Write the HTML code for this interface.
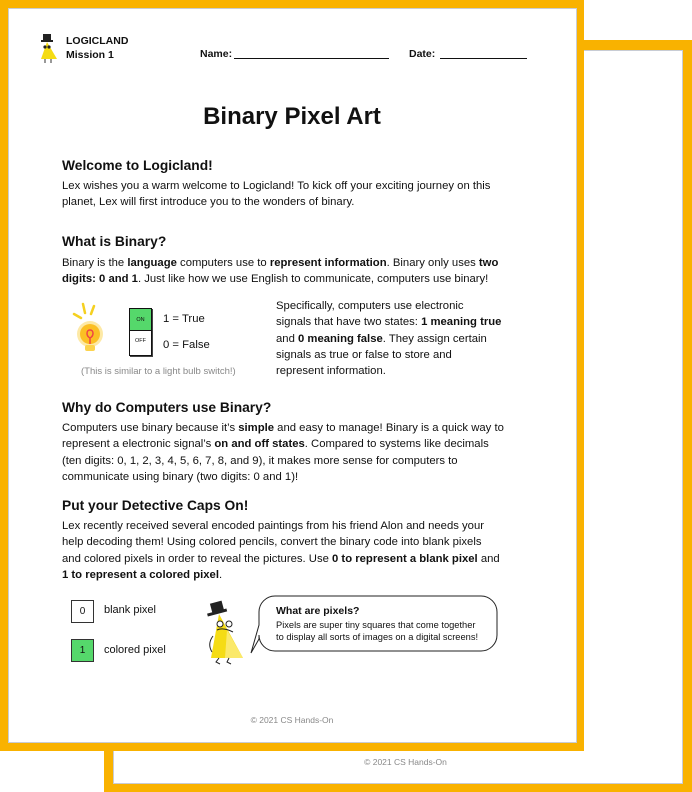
<!DOCTYPE html>
<html><head><meta charset="utf-8"><style>
*{margin:0;padding:0;box-sizing:border-box}
body{width:692px;height:792px;position:relative;background:#fff;font-family:"Liberation Sans",sans-serif;color:#111;overflow:hidden}
.a{position:absolute;white-space:nowrap}
.t{font-size:11.3px;line-height:16.3px}
.h{font-size:13.8px;font-weight:bold}
b{font-weight:bold}
</style></head><body>
<div class="a" style="left:104px;top:40px;width:588px;height:752px;background:#F9B200"></div>
<div class="a" style="left:113px;top:50px;width:570px;height:734px;background:#fff;border:1px solid #c8ccd4"></div>
<div class="a" style="left:0;top:0;width:584px;height:751px;background:#F9B200"></div>
<div class="a" style="left:8px;top:8px;width:569px;height:735px;background:#fff;border:1px solid #c8ccd4"></div>

<svg class="a" style="left:38px;top:33px" width="24" height="32" viewBox="0 0 24 32">
<rect x="5" y="1" width="8" height="7" fill="#222"/><rect x="3" y="7" width="12" height="2" fill="#222"/>
<path d="M9 9 L19 26 L3 26 Z" fill="#f5dc14"/><circle cx="7" cy="14" r="1.6" fill="#222"/><circle cx="11" cy="14" r="1.6" fill="#222"/>
<path d="M7 26 v4 M13 26 v4" stroke="#333" stroke-width="1"/></svg>
<div class="a" style="left:66px;top:34px;font-size:10.5px;font-weight:bold;line-height:14px">LOGICLAND<br>Mission 1</div>
<div class="a" style="left:200px;top:48px;font-size:10.5px;font-weight:bold">Name:</div>
<div class="a" style="left:234px;top:58px;width:155px;border-top:1px solid #111"></div>
<div class="a" style="left:409px;top:48px;font-size:10.5px;font-weight:bold">Date:</div>
<div class="a" style="left:440px;top:58px;width:87px;border-top:1px solid #111"></div>

<div class="a" style="left:0;width:584px;text-align:center;top:103px;font-size:24px;font-weight:bold">Binary Pixel Art</div>

<div class="a h" style="left:62px;top:158px">Welcome to Logicland!</div>
<div class="a t" style="left:62px;top:178px">Lex wishes you a warm welcome to Logicland! To kick off your exciting journey on this<br>planet, Lex will first introduce you to the wonders of binary.</div>

<div class="a h" style="left:62px;top:234px">What is Binary?</div>
<div class="a t" style="left:62px;top:255px">Binary is the <b>language</b> computers use to <b>represent information</b>. Binary only uses <b>two</b><br><b>digits: 0 and 1</b>. Just like how we use English to communicate, computers use binary!</div>

<svg class="a" style="left:70px;top:300px" width="40" height="62" viewBox="0 0 40 62">
<path d="M4 14 L11 18 M13 4 L15 13 M24 6 L21 14" stroke="#f5d020" stroke-width="2.5" stroke-linecap="round"/>
<circle cx="20" cy="34" r="13" fill="#fcd34d" opacity=".5"/><circle cx="20" cy="34" r="10" fill="#fbbf24"/>
<path d="M20 30 c-4 0 -4 6 0 8 c4-2 4-8 0-8 M20 38 v6" stroke="#ef4444" stroke-width="1.5" fill="none"/>
<rect x="15" y="45" width="10" height="6" rx="2" fill="#fcd34d"/></svg>
<div class="a" style="left:129px;top:308px;width:23px;height:48px;border:1.5px solid #111;box-shadow:1px 1px 0 #444;background:#fff">
<div style="height:22px;background:#55d86b;border-bottom:1px solid #111;font-size:5.5px;text-align:center;line-height:22px">ON</div>
<div style="font-size:5.5px;text-align:center;line-height:20px">OFF</div></div>
<div class="a" style="left:163px;top:313px;font-size:11.3px">1 = True</div>
<div class="a" style="left:163px;top:339px;font-size:11.3px">0 = False</div>
<div class="a" style="left:81px;top:366px;font-size:9.5px;color:#888">(This is similar to a light bulb switch!)</div>
<div class="a t" style="left:276px;top:298px">Specifically, computers use electronic<br>signals that have two states: <b>1 meaning true</b><br>and <b>0 meaning false</b>. They assign certain<br>signals as true or false to store and<br>represent information.</div>

<div class="a h" style="left:62px;top:400px">Why do Computers use Binary?</div>
<div class="a t" style="left:62px;top:420px">Computers use binary because it’s <b>simple</b> and easy to manage! Binary is a quick way to<br>represent a electronic signal’s <b>on and off states</b>. Compared to systems like decimals<br>(ten digits: 0, 1, 2, 3, 4, 5, 6, 7, 8, and 9), it makes more sense for computers to<br>communicate using binary (two digits: 0 and 1)!</div>

<div class="a h" style="left:62px;top:498px">Put your Detective Caps On!</div>
<div class="a t" style="left:62px;top:518px">Lex recently received several encoded paintings from his friend Alon and needs your<br>help decoding them! Using colored pencils, convert the binary code into blank pixels<br>and colored pixels in order to reveal the pictures. Use <b>0 to represent a blank pixel</b> and<br><b>1 to represent a colored pixel</b>.</div>

<div class="a" style="left:71px;top:600px;width:23px;height:23px;border:1px solid #333;font-size:10px;text-align:center;line-height:21px">0</div>
<div class="a" style="left:104px;top:604px;font-size:11px">blank pixel</div>
<div class="a" style="left:71px;top:639px;width:23px;height:23px;border:1px solid #333;background:#55d86b;font-size:10px;text-align:center;line-height:21px">1</div>
<div class="a" style="left:104px;top:644px;font-size:11px">colored pixel</div>

<svg class="a" style="left:203px;top:600px" width="46" height="66" viewBox="0 0 46 66">
<rect x="8" y="2" width="12" height="10" fill="#222" transform="rotate(-15 14 7)"/><rect x="4" y="11" width="20" height="3" fill="#222" transform="rotate(-15 14 12)"/>
<path d="M16 14 L40 58 L8 58 Z" fill="#f5dc14"/><path d="M24 30 L40 58 L22 58 Z" fill="#fbe96a"/>
<circle cx="17" cy="24" r="3" fill="#fff" stroke="#222"/><circle cx="26" cy="24" r="3" fill="#fff" stroke="#222"/>
<path d="M14 30 q6 -3 16 2" stroke="#222" fill="none"/><path d="M10 36 q-6 8 -1 16" stroke="#222" fill="none"/>
<path d="M16 58 l-3 4 l4 2 M26 58 l-2 4 l4 2" stroke="#222" fill="none"/></svg>
<svg class="a" style="left:249px;top:595px" width="250" height="62" viewBox="0 0 250 62">
<path d="M26 1 H232 a16 16 0 0 1 16 16 V40 a16 16 0 0 1 -16 16 H26 a16 16 0 0 1 -16 -16 V44 L2 58 L10 30 V17 a16 16 0 0 1 16 -16 Z" fill="#fff" stroke="#222" stroke-width="1"/></svg>
<div class="a" style="left:276px;top:605px;font-size:10.5px;font-weight:bold">What are pixels?</div>
<div class="a" style="left:276px;top:620px;font-size:9.3px;line-height:11.5px">Pixels are super tiny squares that come together<br>to display all sorts of images on a digital screens!</div>

<div class="a" style="left:0;width:584px;text-align:center;top:715px;font-size:8.5px;color:#888">© 2021 CS Hands-On</div>
<div class="a" style="left:113px;width:585px;text-align:center;top:757px;font-size:8.5px;color:#888">© 2021 CS Hands-On</div>
</body></html>
